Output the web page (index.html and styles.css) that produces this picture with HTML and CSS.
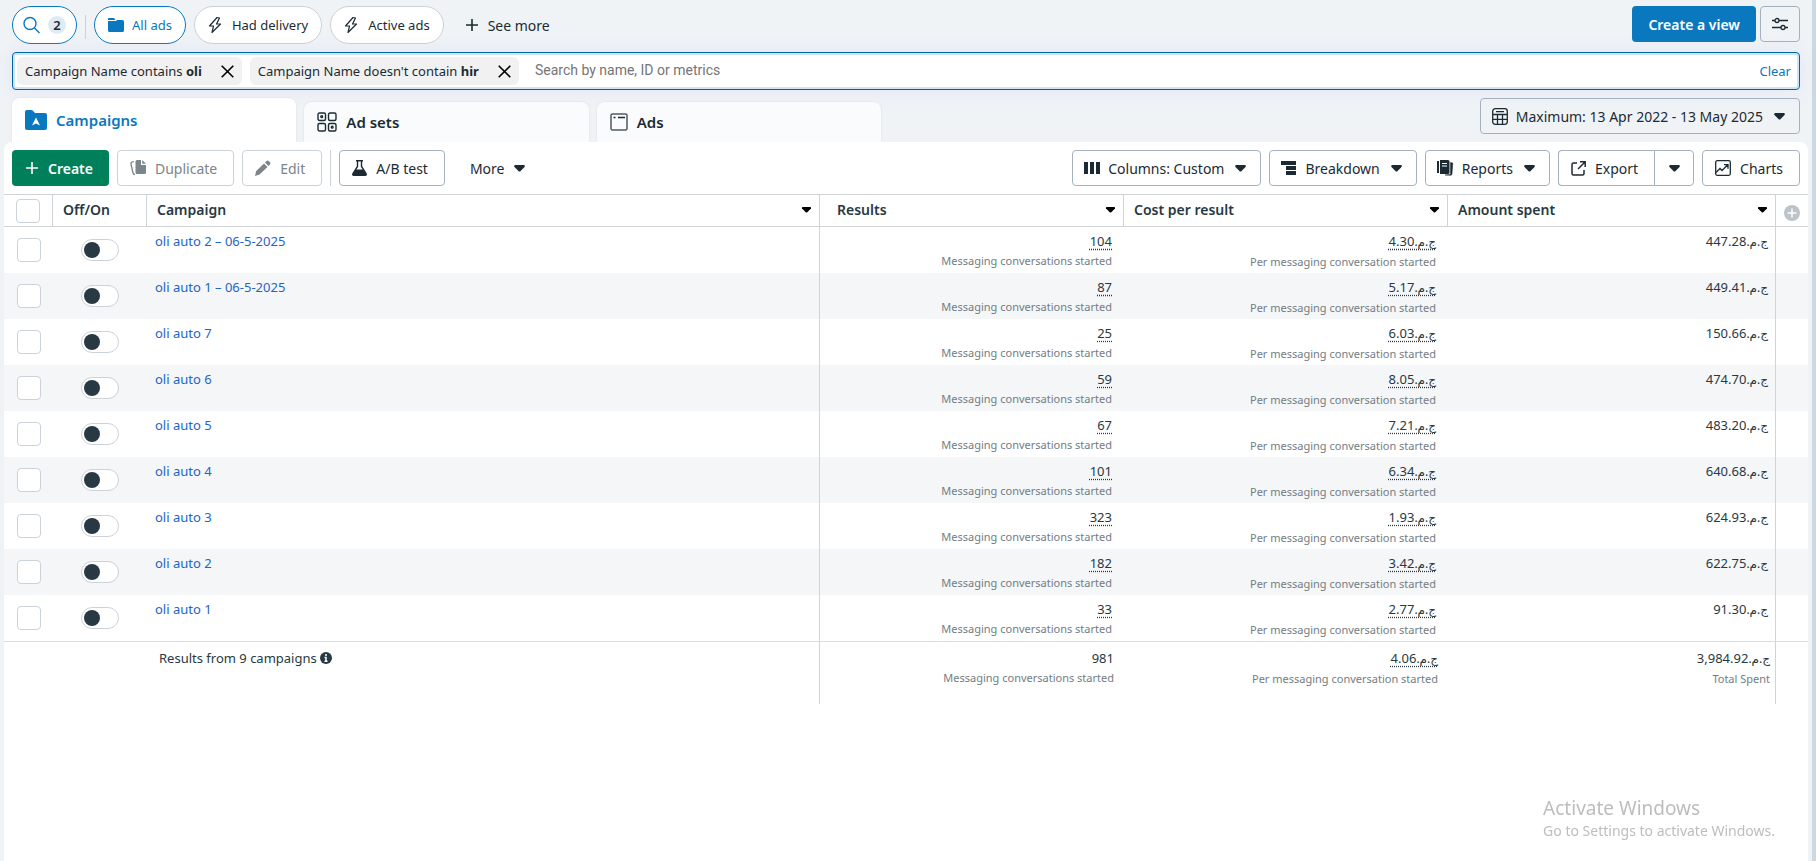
FILE: index.html
```html
<!DOCTYPE html>
<html lang="en">
<head>
  <meta charset="UTF-8" />
  <meta name="viewport" content="width=device-width, initial-scale=1.0" />
  <title>Ads Manager - Campaigns</title>
  <link rel="stylesheet" href="styles.css">
</head>
<body>
  <svg class="sprite" aria-hidden="true">
    <symbol id="caret" viewBox="0 0 12 8"><path d="M1 0h10q1 0 1 1v1L7 7q-1 .8-2 0L0 2V1q0-1 1-1z" fill="currentColor"/></symbol>
    <symbol id="bolt" viewBox="0 0 14 18"><path d="M9 1.500 1.500 10H5.500L4 16.500 12.500 8H8.500L11.500 2z" fill="none" stroke="currentColor" stroke-width="1.200" stroke-linejoin="round"/></symbol>
    <symbol id="plus" viewBox="0 0 12 12"><path d="M6 0v12M0 6h12" stroke="currentColor" stroke-width="1.600"/></symbol>
    <symbol id="cross" viewBox="0 0 13 13"><path d="M.7.7l11.600 11.600M12.300.7L.7 12.300" stroke="currentColor" stroke-width="1.600"/></symbol>
  </svg>

  <div class="page">
    <header class="views">
      <button class="pill pill-on pill-search" aria-label="Search, 2 filters">
        <svg width="17" height="18" viewBox="0 0 17 18" fill="none" stroke="currentColor" stroke-width="1.400"><circle cx="7" cy="7.500" r="6"/><path d="M11.500 12l5 5"/></svg>
        <span class="count">2</span>
      </button>
      <span class="divider"></span>
      <button class="pill pill-on">
        <svg width="16" height="16" viewBox="0 0 16 16" fill="currentColor"><path d="M0 3V2Q0 1 1 1h5l1.500 2z"/><path d="M0 4h8l1-1h5.500Q16 3 16 4.500v9q0 1.500-1.500 1.500h-13Q0 15 0 13.500z"/></svg>
        All ads
      </button>
      <button class="pill pill-bolt"><svg width="14" height="18"><use href="#bolt"/></svg>Had delivery</button>
      <button class="pill pill-bolt"><svg width="14" height="18"><use href="#bolt"/></svg>Active ads</button>
      <button class="plain see-more"><svg width="12" height="12"><use href="#plus"/></svg>See more</button>
      <span class="spacer"></span>
      <button class="btn-primary">Create a view</button>
      <button class="btn btn-icon" aria-label="View settings">
        <svg width="18" height="14" viewBox="0 0 18 14" fill="none" stroke="currentColor" stroke-width="1.300"><path d="M1 3.500h3M8 3.500h9M1 10.500h9M14 10.500h3"/><circle cx="6" cy="3.500" r="2"/><circle cx="12" cy="10.500" r="2"/></svg>
      </button>
    </header>

    <div class="search-bar">
      <span class="chip">Campaign Name contains <b>oli</b><button class="chip-close" aria-label="Remove filter"><svg width="13" height="13"><use href="#cross"/></svg></button></span>
      <span class="chip">Campaign Name doesn't contain <b>hir</b><button class="chip-close" aria-label="Remove filter"><svg width="13" height="13"><use href="#cross"/></svg></button></span>
      <input class="search-input" type="text" placeholder="Search by name, ID or metrics" aria-label="Search">
      <button class="clear">Clear</button>
    </div>

    <div class="tabs-row">
      <nav class="tabs" role="tablist">
        <button class="tab tab-active" role="tab" aria-selected="true">
          <svg width="22" height="20" viewBox="0 0 22 20"><path d="M0 2Q0 0 2 0h4q2 0 3 2l1 1h10q2 0 2 2v13q0 2-2 2H2q-2 0-2-2z" fill="currentColor"/><path d="M11 7.500l4 8-4-2-4 2z" fill="#fff"/></svg>
          Campaigns
        </button>
        <button class="tab" role="tab" aria-selected="false">
          <svg width="20" height="20" viewBox="0 0 20 20" fill="none" stroke="currentColor" stroke-width="1.400"><rect x="1" y="1" width="7.500" height="7.500" rx="1.500"/><rect x="11.500" y="1" width="7.500" height="7.500" rx="1.500"/><rect x="1" y="11.500" width="7.500" height="7.500" rx="1.500"/><rect x="11.500" y="11.500" width="7.500" height="7.500" rx="1.500"/><circle cx="4.700" cy="4.700" r=".9"/><circle cx="15.200" cy="15.200" r=".9"/></svg>
          Ad sets
        </button>
        <button class="tab" role="tab" aria-selected="false">
          <svg width="18" height="18" viewBox="0 0 18 18" fill="none" stroke="#4c5b63" stroke-width="1.500"><rect x="1" y="1" width="16" height="16" rx="1.500"/><path d="M3.500 4.500h2M8 4.500h7" stroke="#1c2b33"/></svg>
          Ads
        </button>
      </nav>
      <button class="btn date-btn">
        <svg width="16" height="17" viewBox="0 0 16 17" fill="none" stroke="currentColor" stroke-width="1.300"><rect x=".7" y=".7" width="14.600" height="15.600" rx="2.500"/><path d="M4 3.700h8M.7 6.500h14.600M.7 11.300h14.600M5.500 6.500v9.500M10.500 6.500v9.500"/></svg>
        Maximum: 13 Apr 2022 - 13 May 2025
        <svg class="caret" width="11" height="7"><use href="#caret"/></svg>
      </button>
    </div>

    <main class="panel">
      <div class="toolbar">
        <button class="btn-create"><svg width="12" height="12"><use href="#plus"/></svg>Create</button>
        <button class="btn btn-text" disabled>
          <svg width="16" height="16" viewBox="0 0 16 16" fill="currentColor"><path d="M7 0h4v4.500q0 .5.500.5H16v7.500q0 1.500-1.500 1.500H7q-1.500 0-1.500-1.500v-11Q5.500 0 7 0z"/><path d="M12.200 0L16 3.800h-3.800z"/><path d="M4 1.500l-2 .7Q.7 2.700 1 4l2 9q.3 1.500 2 1.700" fill="none" stroke="currentColor" stroke-width="1.300"/></svg>
          Duplicate
        </button>
        <button class="btn btn-text" disabled>
          <svg width="16" height="16" viewBox="0 0 16 16" fill="currentColor"><path d="M0 16l1.200-5 7.800-7.500 3.500 3.500-8 7.500z"/><path d="M10 2.500l1.500-1.500q1.200-1 2.200 0L15 2.300q1 1 0 2.200L13.500 6z"/></svg>
          Edit
        </button>
        <span class="divider"></span>
        <button class="btn btn-text">
          <svg width="15" height="16" viewBox="0 0 15 16"><path d="M4 .7h7M5.500 1v5.500L1 13.500q-.8 1.800 1 1.800h11q1.800 0 1-1.800L9.500 6.500V1" fill="none" stroke="currentColor" stroke-width="1.400"/><path d="M3.500 9.500h8l3 5-1 1h-12l-1-1z" fill="currentColor"/></svg>
          A/B test
        </button>
        <button class="plain more">More<svg class="caret" width="11" height="7"><use href="#caret"/></svg></button>
        <span class="spacer"></span>
        <button class="btn">
          <svg width="16" height="12" viewBox="0 0 16 12" fill="currentColor"><path d="M0 0h4v12H0zM6 0h4v12H6zM12 0h4v12h-4z"/></svg>
          Columns: Custom
          <svg class="caret" width="11" height="7"><use href="#caret"/></svg>
        </button>
        <button class="btn">
          <svg width="16" height="14" viewBox="0 0 16 14" fill="currentColor"><path d="M0 0h15v4H0zM5 5h10v4H5zM5 10h10v4H5z"/></svg>
          Breakdown
          <svg class="caret" width="11" height="7"><use href="#caret"/></svg>
        </button>
        <button class="btn">
          <svg width="17" height="16" viewBox="0 0 17 16" fill="currentColor"><path d="M0 1h2v12H0z"/><path d="M3 0h8q1.500 0 1.500 1.500v11q0 1.500-1.500 1.500H3z"/><path d="M5 3.500h5M5 6h5" stroke="#fff"/><path d="M13.500 2.500l2.300.5-.8 11q-.2 1.500-1.500 1.300L8 15l5.500-.5z" stroke="currentColor" stroke-width=".5"/></svg>
          Reports
          <svg class="caret" width="11" height="7"><use href="#caret"/></svg>
        </button>
        <div class="split">
          <button class="btn btn-text">
            <svg width="15" height="15" viewBox="0 0 15 15" fill="none" stroke="currentColor" stroke-width="1.500"><path d="M6 2H2.500Q1 2 1 3.500v9Q1 14 2.500 14h9q1.500 0 1.500-1.500V9M9 .8h5.200V6M14 1L7 8"/></svg>
            Export
          </button>
          <button class="btn btn-drop" aria-label="Export options"><svg width="11" height="7"><use href="#caret"/></svg></button>
        </div>
        <button class="btn btn-text">
          <svg width="16" height="16" viewBox="0 0 16 16" fill="none" stroke="currentColor" stroke-width="1.300"><rect x=".7" y=".7" width="14.600" height="14.600" rx="1.500"/><path d="M1 12.500l4-4 2 2 5.500-5.500M9 4.700h4v4"/></svg>
          Charts
        </button>
      </div>

      <table class="grid">
        <colgroup>
          <col class="col-check"><col class="col-toggle"><col><col class="col-results"><col class="col-cost"><col class="col-spent"><col class="col-add">
        </colgroup>
        <thead>
          <tr>
            <th><input class="check" type="checkbox" aria-label="Select all"></th>
            <th>Off/On</th>
            <th><span class="head">Campaign<button class="sort" aria-label="Sort by campaign"><svg width="9" height="6"><use href="#caret"/></svg></button></span></th>
            <th class="pad-wide"><span class="head">Results<button class="sort" aria-label="Sort by results"><svg width="9" height="6"><use href="#caret"/></svg></button></span></th>
            <th><span class="head">Cost per result<button class="sort" aria-label="Sort by cost"><svg width="9" height="6"><use href="#caret"/></svg></button></span></th>
            <th><span class="head">Amount spent<button class="sort" aria-label="Sort by amount"><svg width="9" height="6"><use href="#caret"/></svg></button></span></th>
            <th class="add-cell"><button class="add" aria-label="Add column"><svg width="16" height="16" viewBox="0 0 16 16"><circle cx="8" cy="8" r="8" fill="#bcc3c9"/><path d="M8 3.500v9M3.500 8h9" stroke="#fff" stroke-width="1.500"/></svg></button></th>
          </tr>
        </thead>
        <tbody id="campaign-list"></tbody>
        <tfoot>
          <tr>
            <td></td>
            <td></td>
            <td class="total-name">Results from 9 campaigns <svg width="12" height="12" viewBox="0 0 12 12"><circle cx="6" cy="6" r="6" fill="#283943"/><path d="M6 2v2M4.500 5.500H6V9M4.500 9.200h3" fill="none" stroke="#fff" stroke-width="1.500"/></svg></td>
            <td class="num">981<small>Messaging conversations started</small></td>
            <td class="num"><span class="dotted"><span class="cur">ج.م.</span>4.06</span><small>Per messaging conversation started</small></td>
            <td class="num"><span class="cur">ج.م.</span>3,984.92<small>Total Spent</small></td>
            <td></td>
          </tr>
        </tfoot>
      </table>
    </main>
  </div>

  <div class="watermark">
    <div class="watermark-title">Activate Windows</div>
    <div>Go to Settings to activate Windows.</div>
  </div>

  <script>
    const campaigns = [
      { name: "oli auto 2 – 06-5-2025", results: 104, cost: "4.30", spent: "447.28" },
      { name: "oli auto 1 – 06-5-2025", results: 87, cost: "5.17", spent: "449.41" },
      { name: "oli auto 7", results: 25, cost: "6.03", spent: "150.66" },
      { name: "oli auto 6", results: 59, cost: "8.05", spent: "474.70" },
      { name: "oli auto 5", results: 67, cost: "7.21", spent: "483.20" },
      { name: "oli auto 4", results: 101, cost: "6.34", spent: "640.68" },
      { name: "oli auto 3", results: 323, cost: "1.93", spent: "624.93" },
      { name: "oli auto 2", results: 182, cost: "3.42", spent: "622.75" },
      { name: "oli auto 1", results: 33, cost: "2.77", spent: "91.30" }
    ];

    function renderCampaigns() {
      let list = document.getElementById('campaign-list');
      campaigns.forEach(item => {
        let row = document.createElement('tr');
        row.innerHTML = `
          <td class="check-cell"><input class="check" type="checkbox" aria-label="Select ${item.name}"></td>
          <td class="toggle-cell"><input class="toggle" type="checkbox" role="switch" aria-label="Turn on ${item.name}"></td>
          <td class="name"><a href="#">${item.name}</a></td>
          <td class="num"><span class="dotted">${item.results}</span><small>Messaging conversations started</small></td>
          <td class="num"><span class="dotted"><span class="cur">ج.م.</span>${item.cost}</span><small>Per messaging conversation started</small></td>
          <td class="num"><span class="cur">ج.م.</span>${item.spent}</td>
          <td></td>`;
        list.appendChild(row);
      });
    }

    renderCampaigns();
  </script>
</body>
</html>
```
FILE: styles.css
```css
* {
  box-sizing: border-box;
}

body {
  margin: 0;
  font-family: "Noto Sans", "DejaVu Sans", sans-serif;
  font-size: 13px;
  color: #1c2b33;
  background: #eff3f6;
}

button {
  font: inherit;
  color: inherit;
  background: none;
  border: none;
  padding: 0;
  cursor: pointer;
}

svg {
  flex: none;
}

.sprite {
  display: none;
}

.page {
  display: flex;
  flex-direction: column;
  min-height: 100vh;
  border-right: 4px solid #cdd7e0;
}

.spacer {
  flex: 1;
}

.divider {
  width: 1px;
  background: #ccd2d9;
}

/* saved views */
.views {
  display: flex;
  gap: 8px;
  padding: 6px 12px 8px;
}

.views .divider {
  height: 24px;
  margin-top: 9px;
}

.pill {
  display: flex;
  align-items: center;
  gap: 8px;
  height: 38px;
  padding: 0 13px;
  border: 1px solid #ccd2d9;
  border-radius: 19px;
  background: #fff;
}

.pill-on {
  border-color: #0a78be;
  color: #0a78be;
}

.pill-search {
  padding: 0 10px;
}

.pill-bolt {
  gap: 10px;
}

.count {
  width: 18px;
  line-height: 18px;
  border-radius: 9px;
  background: #deebf5;
  color: #1c2b33;
  font-size: 13px;
  font-weight: 600;
}

.plain {
  display: flex;
  align-items: center;
  gap: 10px;
  font-size: 14px;
}

.see-more {
  height: 38px;
  margin-left: 14px;
}

.btn-primary,
.btn-create {
  display: flex;
  align-items: center;
  gap: 10px;
  height: 36px;
  padding: 0 16px;
  border-radius: 4px;
  background: #0a78be;
  color: #fff;
  font-size: 14px;
  font-weight: 600;
}

.btn {
  display: flex;
  align-items: center;
  gap: 8px;
  height: 36px;
  padding: 0 11px;
  border: 1px solid #a5b1be;
  border-radius: 4px;
  font-size: 14px;
  white-space: nowrap;
}

.btn:disabled {
  border-color: #ccd2d9;
  color: #7b858b;
}

.btn .caret {
  margin: 0 3px;
}

.btn-text {
  gap: 9px;
  padding: 0 16px 0 12px;
}

.btn-icon {
  width: 40px;
  margin-left: -4px;
  justify-content: center;
}

/* filters */
.search-bar {
  display: flex;
  align-items: center;
  gap: 8px;
  height: 38px;
  margin: 0 12px;
  padding: 0 8px 0 4px;
  border: 1px solid #0064a8;
  border-radius: 4px;
  background: #fff;
  box-shadow: inset 0 0 0 2px #cfe4f7, 0 0 18px rgba(190, 180, 240, 0.2);
}

.chip {
  display: flex;
  align-items: center;
  height: 28px;
  padding: 0 8px;
  border-radius: 6px;
  background: #f1f1f1;
  white-space: pre;
}

.chip-close {
  display: flex;
  margin-left: 19px;
  color: #000;
}

.search-input {
  flex: 1;
  height: 28px;
  padding: 0 8px 2px;
  border: none;
  outline: none;
  background: none;
  font-family: Roboto, sans-serif;
  font-size: 14px;
}

.search-input::placeholder {
  color: #757575;
}

.clear {
  color: #0a78be;
}

/* level tabs */
.tabs-row {
  display: flex;
  justify-content: space-between;
  margin: 8px 12px 0;
}

.tabs {
  display: flex;
  flex: 0 1 869px;
  align-items: flex-end;
  gap: 8px;
}

.tab {
  display: flex;
  flex: 1;
  align-items: center;
  gap: 9px;
  height: 40px;
  padding: 0 13px;
  border-radius: 8px 8px 0 0;
  background: #fafbfd;
  box-shadow: 0 0 3px rgba(0, 0, 0, 0.08);
  font-size: 15px;
  font-weight: 600;
}

.tab-active {
  height: 44px;
  background: #fff;
  color: #0a78be;
}

.date-btn {
  margin-bottom: 8px;
}

/* table panel */
.panel {
  flex: 1;
  margin: 0 4px;
  border-radius: 8px 8px 0 0;
  background: #fff;
}

.toolbar {
  display: flex;
  gap: 8px;
  padding: 8px;
}

.btn-create {
  padding: 0 16px 0 14px;
  background: #00805a;
}

.more {
  margin-left: 17px;
}

.split {
  display: flex;
}

.split .btn-text {
  border-right: none;
  border-radius: 4px 0 0 4px;
}

.split .btn-drop {
  width: 40px;
  padding: 0;
  justify-content: center;
  border-radius: 0 4px 4px 0;
}

.grid {
  width: 100%;
  table-layout: fixed;
  border-collapse: separate;
  border-spacing: 0;
  color: #283943;
}

.col-check {
  width: 49px;
}

.col-toggle {
  width: 94px;
}

.col-results {
  width: 304px;
}

.col-cost {
  width: 324px;
}

.col-spent {
  width: 328px;
}

.col-add {
  width: 32px;
}

th {
  height: 33px;
  padding: 0 8px 2px 10px;
  border: solid #d0d4d7;
  border-width: 1px 1px 1px 0;
  text-align: left;
  font-size: 14px;
  font-weight: 600;
}

th:first-child {
  padding: 0 0 0 12px;
}

th:last-child {
  border-right: none;
}

.pad-wide {
  padding-left: 17px;
}

.head {
  display: flex;
  align-items: center;
  justify-content: space-between;
}

.sort {
  display: flex;
  color: #000;
}

.add-cell {
  padding: 4px 0 0 8px;
}

.add {
  display: flex;
}

td {
  height: 46px;
  padding: 4px 12px 0 8px;
  vertical-align: top;
  line-height: 20px;
}

td:nth-child(3),
td:nth-child(6) {
  border-right: 1px solid #d0d4d7;
}

td:nth-child(6) {
  padding-right: 7px;
}

tbody tr:nth-child(even) {
  background: #f4f6f8;
}

.check {
  display: block;
  appearance: none;
  width: 24px;
  height: 24px;
  margin: 0;
  border: 1px solid #ccd2da;
  border-radius: 4px;
  background: #fff;
}

.check:checked {
  background: #0a78be;
}

.check-cell {
  padding: 11px 0 0 13px;
}

.toggle-cell {
  padding: 12px 0 0 28px;
}

.toggle {
  display: flex;
  align-items: center;
  appearance: none;
  width: 38px;
  height: 22px;
  margin: 0;
  padding: 0 2px;
  border: 1px solid #ccd2da;
  border-radius: 11px;
  background: #fff;
}

.toggle::before {
  content: "";
  width: 16px;
  height: 16px;
  border-radius: 50%;
  background: #283943;
}

.toggle:checked {
  justify-content: flex-end;
}

.name a {
  color: #1b66c9;
  text-decoration: none;
}

.num {
  text-align: right;
}

.num small {
  display: block;
  color: #737d83;
  font-size: 11px;
}

.dotted {
  text-decoration: underline dotted;
  text-underline-offset: 3px;
}

.cur {
  font-size: 12px;
}

tfoot td {
  height: 63px;
  padding: 6px 10px 0 12px;
  border-top: 1px solid #d9dcdf;
}

tfoot td:nth-child(6) {
  padding-right: 5px;
}

.total-name svg {
  vertical-align: -1px;
}

.watermark {
  position: fixed;
  right: 41px;
  bottom: 20px;
  color: #bdbdbd;
  font-size: 14px;
  line-height: 20px;
  pointer-events: none;
}

.watermark-title {
  font-size: 19px;
  line-height: 26px;
}
```
